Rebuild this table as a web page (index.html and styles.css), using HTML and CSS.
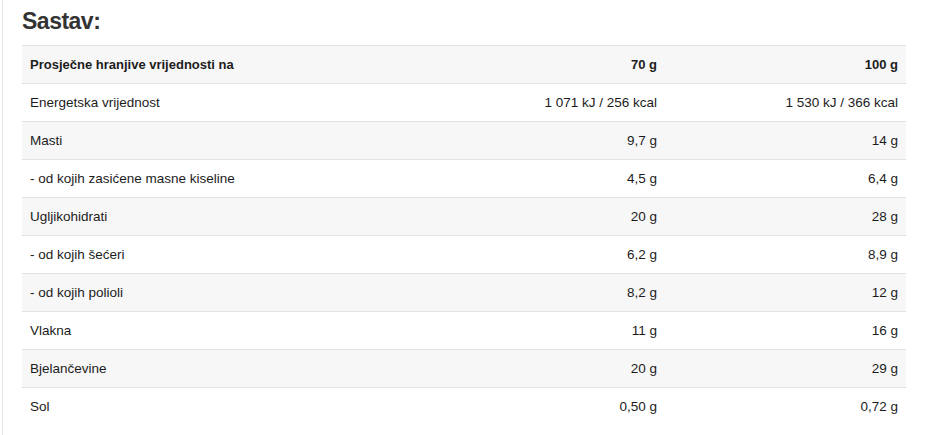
FILE: index.html
```html
<!DOCTYPE html>
<html lang="hr">
<head>
<meta charset="utf-8">
<link rel="stylesheet" href="styles.css">
</head>
<body>
<div class="panel">
  <h2 class="title">Sastav:</h2>
  <table class="nutri">
    <thead>
      <tr class="alt"><th>Prosječne hranjive vrijednosti na</th><th class="num">70 g</th><th class="num">100 g</th></tr>
    </thead>
    <tbody>
      <tr><td>Energetska vrijednost</td><td class="num">1 071 kJ / 256 kcal</td><td class="num">1 530 kJ / 366 kcal</td></tr>
      <tr class="alt"><td>Masti</td><td class="num">9,7 g</td><td class="num">14 g</td></tr>
      <tr><td>- od kojih zasićene masne kiseline</td><td class="num">4,5 g</td><td class="num">6,4 g</td></tr>
      <tr class="alt"><td>Ugljikohidrati</td><td class="num">20 g</td><td class="num">28 g</td></tr>
      <tr><td>- od kojih šećeri</td><td class="num">6,2 g</td><td class="num">8,9 g</td></tr>
      <tr class="alt"><td>- od kojih polioli</td><td class="num">8,2 g</td><td class="num">12 g</td></tr>
      <tr><td>Vlakna</td><td class="num">11 g</td><td class="num">16 g</td></tr>
      <tr class="alt"><td>Bjelančevine</td><td class="num">20 g</td><td class="num">29 g</td></tr>
      <tr><td>Sol</td><td class="num">0,50 g</td><td class="num">0,72 g</td></tr>
    </tbody>
  </table>
</div>
</body>
</html>
```

FILE: styles.css
```css
html, body {
  margin: 0;
  padding: 0;
  background: #fff;
}
body {
  font-family: "Liberation Sans", Arial, sans-serif;
  color: #1c1c1c;
}
.panel {
  margin-left: 2px;
  border-left: 1px solid #e6e6e6;
  padding: 4px 19px 10px 19px;
  width: 884px;
}
.title {
  margin: 0 0 6px 0;
  font-size: 23px;
  line-height: 35px;
  font-weight: 700;
  letter-spacing: -0.5px;
  color: #333;
}
.nutri {
  width: 884px;
  border-collapse: collapse;
  font-size: 13.5px;
  table-layout: fixed;
}
.nutri th, .nutri td {
  height: 37px;
  padding: 0 8px;
  border-top: 1px solid #e2e2e2;
  text-align: left;
  vertical-align: middle;
}
.nutri th { font-weight: 700; font-size: 13px; }
.nutri th:first-child, .nutri td:first-child { width: 386px; }
.nutri .num { text-align: right; }
.nutri tr.alt { background: #f7f7f7; }
```
